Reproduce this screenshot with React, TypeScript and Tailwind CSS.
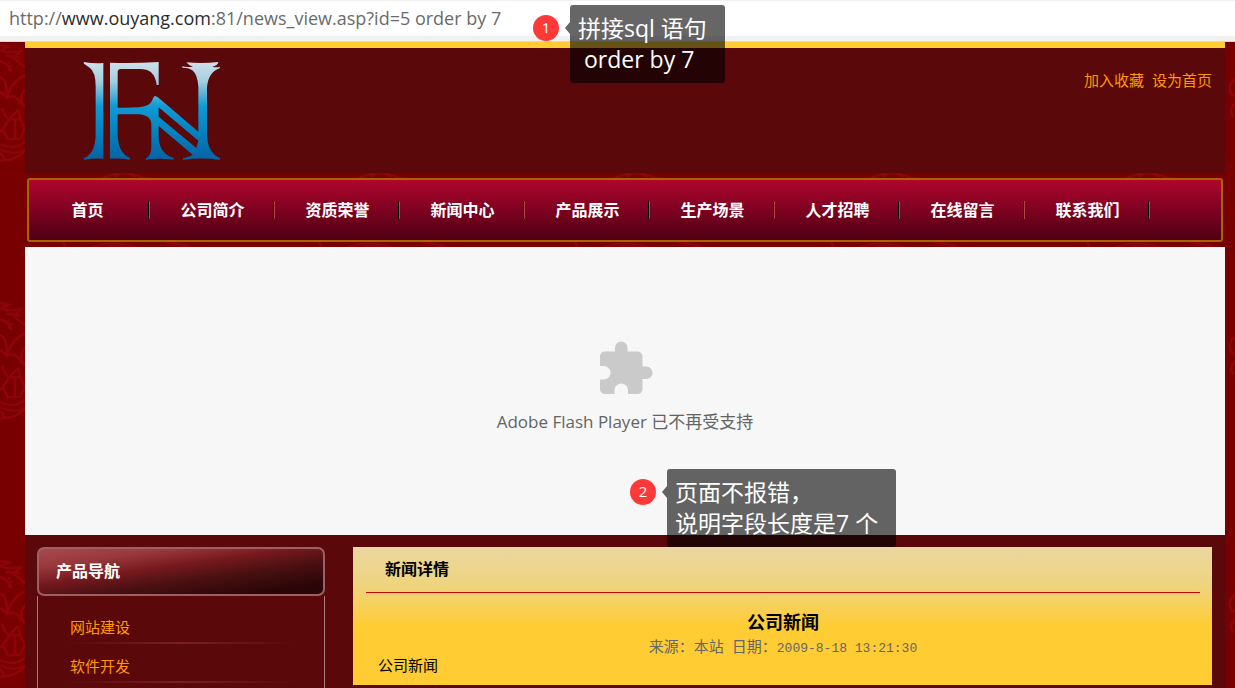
import React from "react";
import { MdExtension } from "react-icons/md";

const navItems = ["首页", "公司简介", "资质荣誉", "新闻中心", "产品展示", "生产场景", "人才招聘", "在线留言", "联系我们"];
const products = ["网站建设", "软件开发"];

function Backdrop() {
  return (
    <svg className="absolute inset-0 h-full w-full" aria-hidden="true">
      <defs>
        <pattern id="carp" x="0" y="42" width="256" height="258" patternUnits="userSpaceOnUse">
          <g transform="scale(0.3333)" fill="none" stroke="#8e040b" strokeWidth="7">
            <path d="M0 8l26 6-22 9M0 24l20 7 42-3-21 20 34 28M18 41l44 6M28 60l-4 4M36 70l-6 4M24 82l10 4" />
            <path d="M0 56q28 12 34 34M0 106q24 8 20 60q-20-20-24-14M20 166q18-52 55-65M75 144q-22 18-2 52M22 166q30-10 42 24" />
            <path d="M6 198q8 26 22 34l26-28M28 232l-20 30 16 30 36-2 14-28-12-30-34 0M46 232l-2 58M8 262l-8 8M54 204l8 28" />
            <path d="M0 306q44 22 75-8M0 322q40 20 75 2M0 356q50 0 75-32M14 352q-8-14-14-20" />
            <path d="M310 408q60-30 130 4M345 404q25-22 60 0M190 600q5 20 20 20M270 620q60-30 150 0M300 624q50-26 90 0M500 600l65 12-40 12" />
            <path d="M635 110q-30 20-10 50h40M640 180q-30 20-12 44M665 110v80" />
          </g>
        </pattern>
      </defs>
      <rect width="100%" height="100%" fill="url(#carp)" />
    </svg>
  );
}

function Logo() {
  return (
    <svg viewBox="0 0 465 360" className="h-[120px] w-[155px]" role="img" aria-label="FN">
      <defs>
        <linearGradient id="blue" x1="0" y1="0" x2="0" y2="1">
          <stop offset="0" stopColor="#cfe0ea" />
          <stop offset="0.2" stopColor="#a3cee0" />
          <stop offset="0.45" stopColor="#119ad3" />
          <stop offset="0.7" stopColor="#0583c0" />
          <stop offset="1" stopColor="#0762a3" />
        </linearGradient>
      </defs>
      <path
        fill="url(#blue)"
        fillRule="evenodd"
        d="M26 36Q55 41 85 39V326Q55 324 26 329V325Q62 312 62 250V110Q62 65 44 53L27 41Z
        M105 38Q180 40 251 36V105H245Q242 80 228 67Q215 57 195 57H138Q128 57 128 66V173Q160 174 190 172Q225 170 232 150Q236 138 241 138Q247 140 255 147L370 245V110Q368 74 352 61Q345 54 322 53V49Q336 53 354 50Q340 46 334 37Q380 42 430 36Q428 47 412 50Q424 53 435 50L434 55Q398 68 396 115V250Q396 309 435 324V329Q400 324 352 326L324 329V325Q345 320 353 314L251 228V260Q252 310 296 324V329Q250 324 213 329V324Q229 318 229 290V225Q229 195 190 193H128V250Q128 309 165 324V329Q135 324 105 326Z
        M251 172L370 272L364 294L251 200Z"
      />
    </svg>
  );
}

function Note({ step, children, className }: { step: number; children: React.ReactNode; className: string }) {
  return (
    <aside className={`absolute flex items-start ${className}`}>
      <span className="mt-[10px] flex h-[26px] w-[26px] items-center justify-center rounded-full bg-[#ff3838] pb-[2px] text-[15px] text-white">
        {step}
      </span>
      <svg viewBox="0 0 5 12" className="mt-[17px] ml-[6px] h-3 w-[5px] fill-black/60" aria-hidden="true">
        <path d="M5 0V12L0 6Z" />
      </svg>
      <p className="h-[78px] flex-1 rounded-[3px] bg-black/60 px-2 pt-2 text-[23px] leading-[31px] whitespace-pre text-white">
        {children}
      </p>
    </aside>
  );
}

export default function App() {
  return (
    <div className="relative flex min-h-screen flex-col overflow-hidden bg-[#780000] font-['Open_Sans','Noto_Sans_CJK_SC',sans-serif]">
      <Backdrop />
      <div className="relative h-[42px] border-t border-b border-t-[#f1f1f1] border-b-[#d6d6d8] bg-[#f1f1f1]">
        <div className="h-[35px] bg-white px-[9px] text-[18px] leading-[35px] whitespace-nowrap text-[#6b6b6b]">
          http://<span className="text-[#2b2b2b]">www.ouyang.com</span>:81/news_view.asp?id=5 order by 7
        </div>
      </div>

      <div className="relative mr-[10px] ml-[25px] flex flex-1 flex-col font-['Noto_Sans_CJK_SC',sans-serif]">
        <header className="flex h-[131px] items-start justify-between border-t-[6px] border-[#ffcc33] bg-[#5a080a] pr-[13px] pl-[50px]">
          <div className="pt-[2px]">
            <Logo />
          </div>
          <div className="flex gap-2 pt-[21px] text-[15px] leading-[22px] text-[#ff9900]">
            <a href="#favorite">加入收藏</a>
            <a href="#home">设为首页</a>
          </div>
        </header>

        <nav className="mx-[2px] my-[5px] h-16 rounded-[3px] border-2 border-[#a86404] bg-linear-to-b from-[#b0062c] to-[#4f0014]">
          <ul className="-ml-1 flex h-full items-center">
            {navItems.map((item) => (
              <li key={item} className="flex w-[125px] items-center">
                <a href="#nav" className="flex-1 pb-[3px] pl-[2px] text-center text-[16px] leading-5 font-bold text-white">
                  {item}
                </a>
                <span className="h-[18px] w-[2px] shrink-0 border-r border-l border-r-[#b04a40] border-l-black" />
              </li>
            ))}
          </ul>
        </nav>

        <section className="flex h-[288px] flex-col items-center bg-[#f7f7f7] pt-[92px] font-['Open_Sans','Noto_Sans_CJK_SC',sans-serif]">
          <MdExtension className="size-[60px] text-[#cacaca]" />
          <p className="mt-[11px] text-[17px] leading-6 text-[#646464]">Adobe Flash Player 已不再受支持</p>
        </section>

        <div className="flex flex-1 gap-7 bg-[#5a080a] pt-3 pr-[13px] pl-3">
          <aside className="flex w-[288px] flex-col">
            <h2 className="flex h-[49px] items-center rounded-[7px] border-2 border-[#9c6062] bg-[linear-gradient(172deg,#a84a4f_0%,#98383d_22%,#76191d_42%,#4a1012_62%,#280506_90%)] pb-[3px] pl-[17px] text-[16px] font-bold text-white">
              产品导航
            </h2>
            <ul className="flex-1 border-r border-l border-[#a87c7e] px-[26px] pt-[13px]">
              {products.map((item) => (
                <li key={item}>
                  <a href="#product" className="block pt-[7px] pl-[6px] text-[15px] leading-[22px] text-[#ff9900]">
                    {item}
                  </a>
                  <div className="mt-[4px] mb-1 h-[2px] bg-linear-to-r from-transparent via-[#7a2024] to-transparent" />
                </li>
              ))}
            </ul>
          </aside>

          <main className="mb-[3px] flex-1 bg-[linear-gradient(#ead7a0_0,#efd47c_40px,#ffcc33_80px)] px-3 pl-[13px]">
            <h2 className="border-b border-[#cc0000] pb-[2px] pl-[19px] text-[16px] leading-[43px] font-bold text-black">
              新闻详情
            </h2>
            <h1 className="pt-4 text-center text-[18px] leading-6 font-bold text-black">公司新闻</h1>
            <p className="flex justify-center gap-2 text-[15px] leading-[25px] text-[#666]">
              <span>来源：本站</span>
              <span>
                日期：
                <time className="font-['Liberation_Mono',monospace] text-[13px]">2009-8-18 13:21:30</time>
              </span>
            </p>
            <p className="-mt-1 pl-3 text-[15px] leading-4 text-black">公司新闻</p>
          </main>
        </div>
      </div>

      <Note step={1} className="top-[5px] left-[533px] w-[192px]">
        {"拼接sql 语句\n order by 7"}
      </Note>
      <Note step={2} className="top-[469px] left-[630px] w-[266px]">
        {"页面不报错，\n说明字段长度是7 个"}
      </Note>
    </div>
  );
}
